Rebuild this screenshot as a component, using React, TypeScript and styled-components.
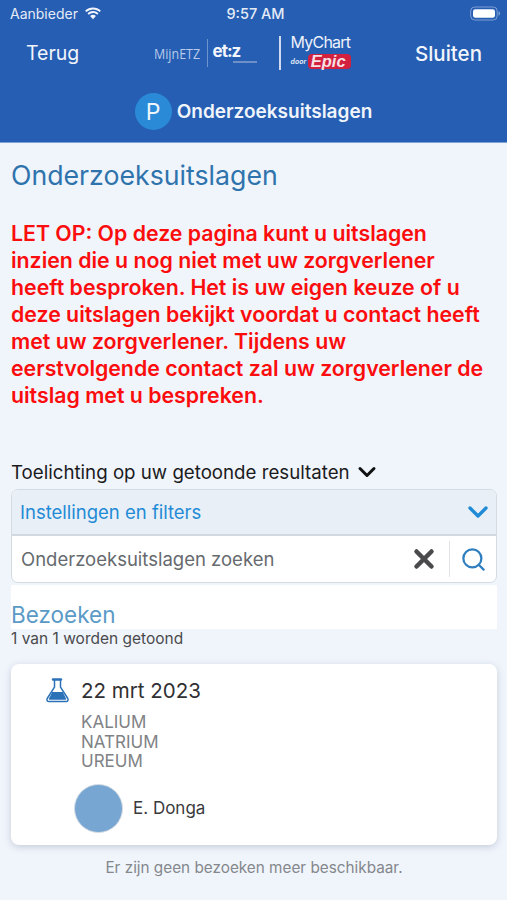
import React from 'react';
import styled, { createGlobalStyle } from 'styled-components';
import { ChevronDown, Search, X } from 'lucide-react';

const GlobalStyle = createGlobalStyle`
  html, body {
    margin: 0;
    padding: 0;
    background: #f0f5fc;
    font-family: Inter, "Liberation Sans", sans-serif;
  }
  * { box-sizing: border-box; }
`;

const Page = styled.div`
  width: 507px;
  height: 900px;
  overflow: hidden;
  display: flex;
  flex-direction: column;
  background: #f0f5fc;
`;

const Header = styled.header`
  height: 143px;
  flex: none;
  background: #255eb3;
  border-bottom: 1px solid #7fa3d6;
  color: #fff;
`;

const StatusBar = styled.div`
  height: 27px;
  padding: 0 6px 0 10px;
  display: grid;
  grid-template-columns: 1fr auto 1fr;
  align-items: center;
  font-size: 14px;
  color: #e4ebf6;
`;

const Carrier = styled.div`
  display: flex;
  align-items: center;
  gap: 6px;
`;

const Clock = styled.div`
  font-size: 14.5px;
  font-weight: 500;
`;

const BatteryWrap = styled.div`
  justify-self: end;
  display: flex;
`;

const NavRow = styled.div`
  height: 52px;
  padding: 0 25px 0 26px;
  display: flex;
  align-items: center;
  justify-content: space-between;
`;

const NavLink = styled.span<{ $strong?: boolean }>`
  font-size: ${(p) => (p.$strong ? 20.5 : 19.5)}px;
  font-weight: ${(p) => (p.$strong ? 500 : 400)};
  color: #f2f5fb;
`;

const Logos = styled.div`
  display: flex;
  align-items: center;
  margin-left: 10px;
`;

const MijnEtz = styled.span`
  width: 53px;
  font-family: "Open Sans", sans-serif;
  font-size: 14.5px;
  white-space: nowrap;
  color: #b9cbe8;
  transform: scaleX(0.86);
  transform-origin: left;
`;

const EtzBlock = styled.div`
  border-left: 1px solid #6f93cc;
  height: 28px;
  padding-left: 5px;
  width: 72px;
  display: flex;
  flex-direction: column;
  justify-content: center;
`;

const EtzMark = styled.span`
  font-size: 17px;
  font-weight: 700;
  line-height: 15px;
  letter-spacing: -1px;
  color: #f3f6fc;
`;

const EtzRule = styled.span`
  display: block;
  height: 2px;
  width: 24px;
  margin: 2px 0 0 20px;
  background: #6d90c8;
`;

const LogoDivider = styled.div`
  width: 2px;
  height: 34px;
  background: #cfdcf0;
  margin-right: 10px;
`;

const MyChart = styled.div`
  display: flex;
  flex-direction: column;
  align-items: stretch;
  width: 60px;
  margin-top: -3px;
`;

const MyChartName = styled.span`
  font-size: 16px;
  line-height: 15px;
  letter-spacing: -0.8px;
  white-space: nowrap;
  color: #eef2fa;
`;

const EpicRow = styled.div`
  display: flex;
  align-items: center;
  justify-content: space-between;
  margin-top: 4px;
`;

const Door = styled.span`
  font-size: 7px;
  font-style: italic;
  font-weight: 600;
  color: #e8eef8;
`;

const EpicBadge = styled.span`
  font-family: "Liberation Sans", sans-serif;
  font-size: 16.5px;
  line-height: 15px;
  font-weight: 700;
  font-style: italic;
  padding: 0 5px 0 3px;
  color: #f7dfe3;
  background: #d2213f;
  border-radius: 4px;
`;

const TitleRow = styled.div`
  height: 37px;
  margin-top: 14px;
  display: flex;
  align-items: center;
  justify-content: center;
  gap: 5px;
`;

const PatientBadge = styled.div`
  width: 37px;
  height: 37px;
  border-radius: 50%;
  background: #2b8ad8;
  display: flex;
  align-items: center;
  justify-content: center;
  font-size: 23px;
  color: #eef5fc;
`;

const TitleText = styled.span`
  font-size: 19px;
  font-weight: 600;
  color: #f0f4fb;
`;

const Main = styled.main`
  flex: 1;
  padding: 0 10px 0 11px;
`;

const PageTitle = styled.h1`
  margin: 15px 0 0;
  font-size: 26.7px;
  line-height: 35px;
  font-weight: 400;
  color: #2f73ad;
`;

const Warning = styled.p`
  margin: 27px 0 0;
  max-width: 476px;
  font-size: 21.3px;
  line-height: 27px;
  font-weight: 600;
  color: #fb0d0d;
`;

const Explain = styled.div`
  margin-top: 50px;
  height: 26px;
  display: flex;
  align-items: center;
  gap: 3px;
  font-size: 18.7px;
  color: #1b1b1d;
`;

const FilterBox = styled.div`
  margin-top: 4px;
  height: 94px;
  border: 1px solid #d5dbe3;
  border-radius: 7px;
  overflow: hidden;
  background: #fff;
`;

const FilterHead = styled.div`
  height: 46px;
  padding: 0 2px 0 8px;
  display: flex;
  align-items: center;
  justify-content: space-between;
  background: #e9eff6;
  border-bottom: 2px solid #d3d9e1;
  font-size: 18.5px;
  color: #1f8bd6;
`;

const SearchRow = styled.div`
  height: 46px;
  padding-left: 9px;
  display: flex;
  align-items: center;
  font-size: 18.5px;
  color: #666a6e;
`;

const SearchLabel = styled.span`
  flex: 1;
`;

const ClearButton = styled.div`
  display: flex;
  margin-right: 10px;
`;

const SearchButton = styled.div`
  width: 47px;
  height: 36px;
  border-left: 1px solid #dfe3e8;
  display: flex;
  align-items: center;
  justify-content: center;
`;

const VisitsHeading = styled.h2`
  margin: 2px 0 0;
  height: 44px;
  padding-top: 15px;
  background: #fff;
  font-size: 22.5px;
  line-height: 29px;
  font-weight: 400;
  color: #5b9ac6;
`;

const Count = styled.div`
  font-size: 15.5px;
  line-height: 20px;
  color: #4a4a4c;
`;

const Card = styled.section`
  margin-top: 15px;
  height: 181px;
  padding: 13px 0 0 34px;
  background: #fff;
  border-radius: 8px;
  box-shadow: 0 2px 7px rgba(70, 85, 110, 0.25);
`;

const CardHead = styled.div`
  display: flex;
  align-items: center;
  gap: 11px;
  height: 26px;
  font-size: 20.5px;
  color: #303033;
`;

const TestList = styled.ul`
  list-style: none;
  margin: 10px 0 0 36px;
  padding: 0;
  font-size: 17px;
  line-height: 19.6px;
  color: #808285;
`;

const Provider = styled.div`
  margin: 12px 0 0 29px;
  display: flex;
  align-items: center;
  gap: 10px;
  font-size: 17px;
  color: #3a3a3d;
`;

const Avatar = styled.div`
  width: 49px;
  height: 49px;
  border-radius: 50%;
  background: #76a6d1;
  border: 1px solid #d6dde5;
`;

const NoMore = styled.div`
  margin-top: 13px;
  text-align: center;
  font-size: 15.3px;
  line-height: 20px;
  color: #84878b;
`;

const WifiIcon = () => (
  <svg width="18" height="13" viewBox="0 0 18 13" aria-hidden="true">
    <path d="M9 2.4c2.6 0 4.9 1 6.6 2.7l1.3-1.4A11.3 11.3 0 0 0 9 .4 11.3 11.3 0 0 0 1.100 3.700l1.300 1.400A9.300 9.300 0 0 1 9 2.400z" fill="#f2f5fb" />
    <path d="M9 6c1.600 0 3.100.6 4.200 1.700l1.300-1.400A7.800 7.800 0 0 0 9 4a7.800 7.800 0 0 0-5.500 2.300l1.300 1.400A6 6 0 0 1 9 6z" fill="#f2f5fb" />
    <path d="M9 7.800c-1.100 0-2.100.4-2.900 1.100L9 12.200l2.900-3.300A4.300 4.300 0 0 0 9 7.800z" fill="#f2f5fb" />
  </svg>
);

const BatteryIcon = () => (
  <svg width="31" height="15" viewBox="0 0 31 15" aria-hidden="true">
    <rect x="0.700" y="1" width="26.500" height="13" rx="4" fill="none" stroke="#7e9fd2" />
    <rect x="3" y="3.200" width="22" height="8.600" rx="2.400" fill="#fff" />
    <path d="M28.500 5.300c1 .3 1.600 1.200 1.600 2.200s-.6 1.900-1.600 2.200z" fill="#7e9fd2" />
  </svg>
);

const FlaskIcon = () => (
  <svg width="25" height="25" viewBox="0 0 25 25" aria-hidden="true">
    <path d="M8 1.500h8" stroke="#2a71b8" strokeWidth="2.400" strokeLinecap="round" />
    <path d="M9.500 2v7.200L2.200 20.500c-.8 1.400.1 3 1.700 3h17.200c1.600 0 2.500-1.600 1.700-3L15.500 9.200V2" fill="none" stroke="#2a71b8" strokeWidth="1.500" strokeLinejoin="round" />
    <path d="M7.200 14h10.600l3.300 6.800c.2.500-.1.900-.6.900H4.500c-.5 0-.8-.4-.6-.9z" fill="#2a71b8" />
  </svg>
);

const tests = ['KALIUM', 'NATRIUM', 'UREUM'];

const App: React.FC = () => {
  return (
    <Page>
      <GlobalStyle />
      <Header>
        <StatusBar>
          <Carrier>
            Aanbieder
            <WifiIcon />
          </Carrier>
          <Clock>9:57 AM</Clock>
          <BatteryWrap>
            <BatteryIcon />
          </BatteryWrap>
        </StatusBar>
        <NavRow>
          <NavLink>Terug</NavLink>
          <Logos>
            <MijnEtz>MijnETZ</MijnEtz>
            <EtzBlock>
              <EtzMark>et:z</EtzMark>
              <EtzRule />
            </EtzBlock>
            <LogoDivider />
            <MyChart>
              <MyChartName>MyChart</MyChartName>
              <EpicRow>
                <Door>door</Door>
                <EpicBadge>Epic</EpicBadge>
              </EpicRow>
            </MyChart>
          </Logos>
          <NavLink $strong>Sluiten</NavLink>
        </NavRow>
        <TitleRow>
          <PatientBadge>P</PatientBadge>
          <TitleText>Onderzoeksuitslagen</TitleText>
        </TitleRow>
      </Header>
      <Main>
        <PageTitle>Onderzoeksuitslagen</PageTitle>
        <Warning>
          LET OP: Op deze pagina kunt u uitslagen inzien die u nog niet met uw zorgverlener heeft
          besproken. Het is uw eigen keuze of u deze uitslagen bekijkt voordat u contact heeft met
          uw zorgverlener. Tijdens uw eerstvolgende contact zal uw zorgverlener de uitslag met u
          bespreken.
        </Warning>
        <Explain>
          Toelichting op uw getoonde resultaten
          <ChevronDown size={28} strokeWidth={2.6} color="#111" />
        </Explain>
        <FilterBox>
          <FilterHead>
            Instellingen en filters
            <ChevronDown size={32} strokeWidth={2.5} color="#1f8bd6" />
          </FilterHead>
          <SearchRow>
            <SearchLabel>Onderzoeksuitslagen zoeken</SearchLabel>
            <ClearButton>
              <X size={30} strokeWidth={3.6} color="#4a4a4c" />
            </ClearButton>
            <SearchButton>
              <Search size={27} strokeWidth={2} color="#2f7fc0" />
            </SearchButton>
          </SearchRow>
        </FilterBox>
        <VisitsHeading>Bezoeken</VisitsHeading>
        <Count>1 van 1 worden getoond</Count>
        <Card>
          <CardHead>
            <FlaskIcon />
            22 mrt 2023
          </CardHead>
          <TestList>
            {tests.map((test) => (
              <li key={test}>{test}</li>
            ))}
          </TestList>
          <Provider>
            <Avatar />
            E. Donga
          </Provider>
        </Card>
        <NoMore>Er zijn geen bezoeken meer beschikbaar.</NoMore>
      </Main>
    </Page>
  );
};

export default App;
